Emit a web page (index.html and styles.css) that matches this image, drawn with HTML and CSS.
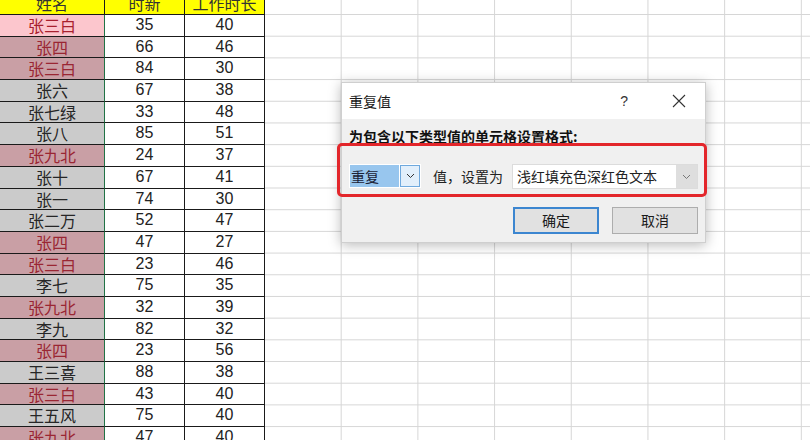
FILE: index.html
```html
<!DOCTYPE html>
<html lang="zh-CN">
<head>
<meta charset="utf-8">
<title>重复值</title>
<link rel="stylesheet" href="styles.css">
</head>
<body>
<div class="sheet">
  <div class="table">
    <div class="c a head">姓名</div><div class="c head">时新</div><div class="c head">工作时长</div>
    <div class="c a active">张三白</div><div class="c">35</div><div class="c">40</div>
    <div class="c a dup">张四</div><div class="c">66</div><div class="c">46</div>
    <div class="c a dup">张三白</div><div class="c">84</div><div class="c">30</div>
    <div class="c a uniq">张六</div><div class="c">67</div><div class="c">38</div>
    <div class="c a uniq">张七绿</div><div class="c">33</div><div class="c">48</div>
    <div class="c a uniq">张八</div><div class="c">85</div><div class="c">51</div>
    <div class="c a dup">张九北</div><div class="c">24</div><div class="c">37</div>
    <div class="c a uniq">张十</div><div class="c">67</div><div class="c">41</div>
    <div class="c a uniq">张一</div><div class="c">74</div><div class="c">30</div>
    <div class="c a uniq">张二万</div><div class="c">52</div><div class="c">47</div>
    <div class="c a dup">张四</div><div class="c">47</div><div class="c">27</div>
    <div class="c a dup">张三白</div><div class="c">23</div><div class="c">46</div>
    <div class="c a uniq">李七</div><div class="c">75</div><div class="c">35</div>
    <div class="c a dup">张九北</div><div class="c">32</div><div class="c">39</div>
    <div class="c a uniq">李九</div><div class="c">82</div><div class="c">32</div>
    <div class="c a dup">张四</div><div class="c">23</div><div class="c">56</div>
    <div class="c a uniq">王三喜</div><div class="c">88</div><div class="c">38</div>
    <div class="c a dup">张三白</div><div class="c">43</div><div class="c">40</div>
    <div class="c a uniq">王五风</div><div class="c">75</div><div class="c">40</div>
    <div class="c a dup">张九北</div><div class="c">47</div><div class="c">40</div>
  </div>
</div>

<div class="dialog">
  <div class="titlebar">
    <span class="title">重复值</span>
    <span class="help">?</span>
    <svg class="close" width="14" height="14" viewBox="0 0 14 14"><path d="M1 1 L13 13 M13 1 L1 13" stroke="#333" stroke-width="1.1" fill="none"/></svg>
  </div>
  <div class="body">
    <div class="label">为包含以下类型值的单元格设置格式:</div>
    <div class="row">
      <div class="combo1">
        <span class="sel">重复</span>
        <span class="btn1"><svg width="9" height="6" viewBox="0 0 9 6"><path d="M1 1 L4.5 4.5 L8 1" stroke="#333" stroke-width="1" fill="none"/></svg></span>
      </div>
      <span class="mid">值，设置为</span>
      <div class="combo2">
        <span class="val">浅红填充色深红色文本</span>
        <span class="btn2"><svg width="9" height="6" viewBox="0 0 9 6"><path d="M1 1 L4.5 4.5 L8 1" stroke="#777" stroke-width="1" fill="none"/></svg></span>
      </div>
    </div>
    <div class="buttons">
      <div class="button primary">确定</div>
      <div class="button">取消</div>
    </div>
  </div>
</div>
<div class="redbox"></div>
</body>
</html>
```
FILE: styles.css
```css
html, body {
  margin: 0;
  padding: 0;
}
body {
  width: 810px;
  height: 440px;
  overflow: hidden;
  position: relative;
  background: #fff;
  font-family: "Liberation Sans", "Noto Sans CJK SC", sans-serif;
}
.sheet {
  width: 810px;
  height: 440px;
  overflow: hidden;
  background-color: #fff;
  background-image:
    linear-gradient(to right, transparent 75.7px, #d6d6d6 75.7px),
    linear-gradient(to bottom, transparent 20.7px, #d6d6d6 20.7px);
  background-size: 76.7px 100%, 100% 21.7px;
  background-position: 265px 0, 0 15px;
}
.table {
  margin-top: -6.7px;
  display: grid;
  grid-template-columns: 105px 80px 80px;
  grid-auto-rows: 21.7px;
  width: 265px;
}
.c {
  box-sizing: border-box;
  border-right: 1px solid #1a1a1a;
  border-bottom: 1px solid #1a1a1a;
  background: #fff;
  color: #222;
  font-size: 16px;
  line-height: 20.7px;
  text-align: center;
  white-space: nowrap;
}
.c.a {
  border-right: 1px solid #217346;
  font-family: "Noto Sans CJK SC", sans-serif;
}
.c.head {
  background: #ffff00;
  color: #333;
  font-family: "Noto Sans CJK SC", sans-serif;
}
.c.a.head {
  border-right-color: #1a1a1a;
}
.c.active {
  background: #fcc6cd;
  color: #a8202e;
}
.c.dup {
  background: #c99fa5;
  color: #9a2633;
}
.c.uniq {
  background: #cbcbcb;
  color: #262626;
}

/* dialog */
.dialog {
  position: absolute;
  left: 341px;
  top: 82px;
  width: 365px;
  height: 161px;
  box-sizing: border-box;
  border: 1px solid #cfcfcf;
  box-shadow: 0 2px 12px rgba(0, 0, 0, 0.28);
  display: flex;
  flex-direction: column;
  font-family: "Noto Sans CJK SC", sans-serif;
  color: #1a1a1a;
  background: #f0f0f0;
}
.titlebar {
  height: 36px;
  flex: none;
  background: #fff;
  display: flex;
  align-items: center;
  padding-left: 7px;
}
.title {
  font-size: 14px;
  flex: 1;
}
.help {
  font-family: "Liberation Sans", sans-serif;
  font-size: 14px;
  color: #333;
  margin-right: 44px;
}
.close {
  margin-right: 19px;
}
.body {
  flex: 1;
  padding: 8px 7px 0 7px;
  display: flex;
  flex-direction: column;
}
.label {
  font-size: 14px;
  font-weight: bold;
  line-height: 18px;
  color: #111;
}
.row {
  margin-top: 19px;
  display: flex;
  align-items: flex-start;
  height: 25px;
}
.combo1 {
  box-sizing: border-box;
  width: 72px;
  height: 24px;
  display: flex;
  background: #fff;
  border: 1px solid #fff;
}
.sel {
  width: 48px;
  background: #98c6ee;
  color: #1b2236;
  font-size: 14px;
  line-height: 22px;
  padding-left: 1px;
}
.btn1 {
  margin-left: 1px;
  flex: 1;
  box-sizing: border-box;
  background: #e2effb;
  border: 1px solid #6fa9de;
  display: flex;
  align-items: center;
  justify-content: center;
}
.mid {
  margin-left: 12px;
  font-size: 14px;
  line-height: 24px;
  color: #222;
}
.combo2 {
  margin-left: auto;
  margin-right: 0;
  box-sizing: border-box;
  width: 186px;
  height: 25px;
  display: flex;
  background: #fff;
  border: 1px solid #dcdcdc;
}
.val {
  flex: 1;
  font-size: 14px;
  line-height: 23px;
  padding-left: 4px;
  color: #222;
}
.btn2 {
  width: 21px;
  background: #dedede;
  display: flex;
  align-items: center;
  justify-content: center;
}
.buttons {
  margin-top: 18px;
  display: flex;
  justify-content: flex-end;
  gap: 13px;
  padding-right: 0;
}
.button {
  box-sizing: border-box;
  width: 86px;
  height: 27px;
  background: #e1e1e1;
  border: 1px solid #adadad;
  font-size: 14px;
  line-height: 25px;
  text-align: center;
  color: #1a1a1a;
}
.button.primary {
  border: 2px solid #3c86d0;
  line-height: 23px;
}
.redbox {
  position: absolute;
  left: 337px;
  top: 143px;
  width: 370px;
  height: 54px;
  box-sizing: border-box;
  border: 3px solid #e3262b;
  border-radius: 5px;
}
```
